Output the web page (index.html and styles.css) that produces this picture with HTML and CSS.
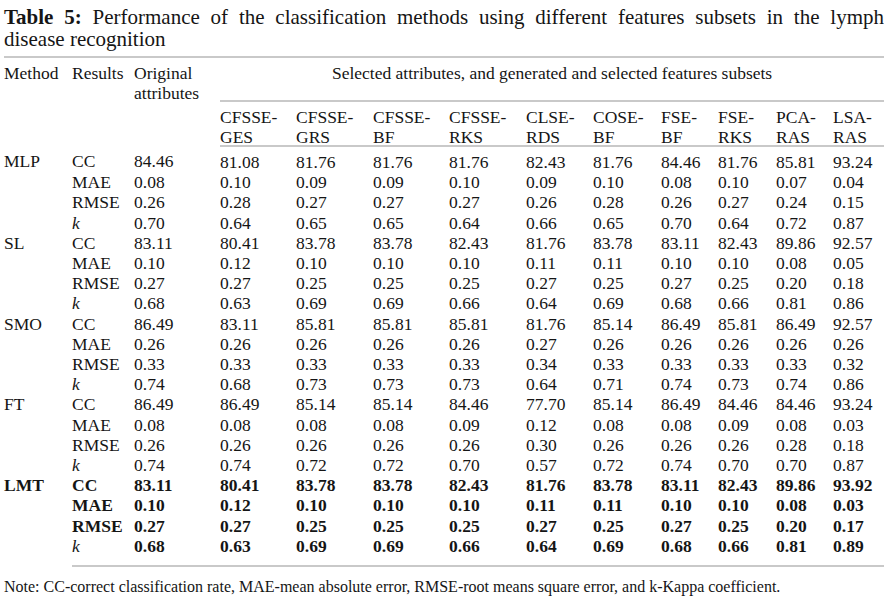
FILE: index.html
```html
<!DOCTYPE html>
<html lang="en">
<head>
<meta charset="utf-8">
<title>Table 5</title>
<link rel="stylesheet" href="styles.css">
</head>
<body>
<div class="page">
  <p class="caption"><span class="cap-line full"><b>Table 5:</b> Performance of the classification methods using different features subsets in the lymph</span><span class="cap-line">disease recognition</span></p>
  <table class="results">
    <colgroup>
      <col class="w-method"><col class="w-results"><col class="w-orig">
      <col class="w-76"><col class="w-77"><col class="w-76"><col class="w-77">
      <col class="w-67"><col class="w-68"><col class="w-57"><col class="w-58"><col class="w-57"><col class="w-51">
    </colgroup>
    <thead>
      <tr class="h1">
        <th rowspan="2">Method</th>
        <th rowspan="2">Results</th>
        <th rowspan="2">Original<br>attributes</th>
        <th colspan="10" class="group">Selected attributes, and generated and selected features subsets</th>
      </tr>
      <tr class="h2">
        <th><div class="two">CFSSE-<br>GES</div></th>
        <th><div class="two">CFSSE-<br>GRS</div></th>
        <th><div class="two">CFSSE-<br>BF</div></th>
        <th><div class="two">CFSSE-<br>RKS</div></th>
        <th><div class="two">CLSE-<br>RDS</div></th>
        <th><div class="two">COSE-<br>BF</div></th>
        <th><div class="two">FSE-<br>BF</div></th>
        <th><div class="two">FSE-<br>RKS</div></th>
        <th><div class="two">PCA-<br>RAS</div></th>
        <th><div class="two">LSA-<br>RAS</div></th>
      </tr>
    </thead>
    <tbody>
      <tr class="first"><td rowspan="4">MLP</td><td>CC</td><td>84.46</td><td>81.08</td><td>81.76</td><td>81.76</td><td>81.76</td><td>82.43</td><td>81.76</td><td>84.46</td><td>81.76</td><td>85.81</td><td>93.24</td></tr>
      <tr><td>MAE</td><td>0.08</td><td>0.10</td><td>0.09</td><td>0.09</td><td>0.10</td><td>0.09</td><td>0.10</td><td>0.08</td><td>0.10</td><td>0.07</td><td>0.04</td></tr>
      <tr><td>RMSE</td><td>0.26</td><td>0.28</td><td>0.27</td><td>0.27</td><td>0.27</td><td>0.26</td><td>0.28</td><td>0.26</td><td>0.27</td><td>0.24</td><td>0.15</td></tr>
      <tr><td><i class="kappa">k</i></td><td>0.70</td><td>0.64</td><td>0.65</td><td>0.65</td><td>0.64</td><td>0.66</td><td>0.65</td><td>0.70</td><td>0.64</td><td>0.72</td><td>0.87</td></tr>

      <tr><td rowspan="4">SL</td><td>CC</td><td>83.11</td><td>80.41</td><td>83.78</td><td>83.78</td><td>82.43</td><td>81.76</td><td>83.78</td><td>83.11</td><td>82.43</td><td>89.86</td><td>92.57</td></tr>
      <tr><td>MAE</td><td>0.10</td><td>0.12</td><td>0.10</td><td>0.10</td><td>0.10</td><td>0.11</td><td>0.11</td><td>0.10</td><td>0.10</td><td>0.08</td><td>0.05</td></tr>
      <tr><td>RMSE</td><td>0.27</td><td>0.27</td><td>0.25</td><td>0.25</td><td>0.25</td><td>0.27</td><td>0.25</td><td>0.27</td><td>0.25</td><td>0.20</td><td>0.18</td></tr>
      <tr><td><i class="kappa">k</i></td><td>0.68</td><td>0.63</td><td>0.69</td><td>0.69</td><td>0.66</td><td>0.64</td><td>0.69</td><td>0.68</td><td>0.66</td><td>0.81</td><td>0.86</td></tr>

      <tr><td rowspan="4">SMO</td><td>CC</td><td>86.49</td><td>83.11</td><td>85.81</td><td>85.81</td><td>85.81</td><td>81.76</td><td>85.14</td><td>86.49</td><td>85.81</td><td>86.49</td><td>92.57</td></tr>
      <tr><td>MAE</td><td>0.26</td><td>0.26</td><td>0.26</td><td>0.26</td><td>0.26</td><td>0.27</td><td>0.26</td><td>0.26</td><td>0.26</td><td>0.26</td><td>0.26</td></tr>
      <tr><td>RMSE</td><td>0.33</td><td>0.33</td><td>0.33</td><td>0.33</td><td>0.33</td><td>0.34</td><td>0.33</td><td>0.33</td><td>0.33</td><td>0.33</td><td>0.32</td></tr>
      <tr><td><i class="kappa">k</i></td><td>0.74</td><td>0.68</td><td>0.73</td><td>0.73</td><td>0.73</td><td>0.64</td><td>0.71</td><td>0.74</td><td>0.73</td><td>0.74</td><td>0.86</td></tr>

      <tr><td rowspan="4">FT</td><td>CC</td><td>86.49</td><td>86.49</td><td>85.14</td><td>85.14</td><td>84.46</td><td>77.70</td><td>85.14</td><td>86.49</td><td>84.46</td><td>84.46</td><td>93.24</td></tr>
      <tr><td>MAE</td><td>0.08</td><td>0.08</td><td>0.08</td><td>0.08</td><td>0.09</td><td>0.12</td><td>0.08</td><td>0.08</td><td>0.09</td><td>0.08</td><td>0.03</td></tr>
      <tr><td>RMSE</td><td>0.26</td><td>0.26</td><td>0.26</td><td>0.26</td><td>0.26</td><td>0.30</td><td>0.26</td><td>0.26</td><td>0.26</td><td>0.28</td><td>0.18</td></tr>
      <tr><td><i class="kappa">k</i></td><td>0.74</td><td>0.74</td><td>0.72</td><td>0.72</td><td>0.70</td><td>0.57</td><td>0.72</td><td>0.74</td><td>0.70</td><td>0.70</td><td>0.87</td></tr>

      <tr class="best"><td rowspan="4">LMT</td><td>CC</td><td>83.11</td><td>80.41</td><td>83.78</td><td>83.78</td><td>82.43</td><td>81.76</td><td>83.78</td><td>83.11</td><td>82.43</td><td>89.86</td><td>93.92</td></tr>
      <tr class="best"><td>MAE</td><td>0.10</td><td>0.12</td><td>0.10</td><td>0.10</td><td>0.10</td><td>0.11</td><td>0.11</td><td>0.10</td><td>0.10</td><td>0.08</td><td>0.03</td></tr>
      <tr class="best"><td>RMSE</td><td>0.27</td><td>0.27</td><td>0.25</td><td>0.25</td><td>0.25</td><td>0.27</td><td>0.25</td><td>0.27</td><td>0.25</td><td>0.20</td><td>0.17</td></tr>
      <tr class="best last"><td><i class="kappa">k</i></td><td>0.68</td><td>0.63</td><td>0.69</td><td>0.69</td><td>0.66</td><td>0.64</td><td>0.69</td><td>0.68</td><td>0.66</td><td>0.81</td><td>0.89</td></tr>
    </tbody>
  </table>
  <p class="note">Note: CC-correct classification rate, MAE-mean absolute error, RMSE-root means square error, and k-Kappa coefficient.</p>
</div>
</body>
</html>
```

FILE: styles.css
```css
html, body {
  margin: 0;
  padding: 0;
  background: #ffffff;
}

body {
  font-family: "Liberation Serif", "Times New Roman", serif;
  color: #151515;
}

.page {
  width: 884px;
  padding: 6px 0 0 4px;
  box-sizing: border-box;
}

.caption {
  margin: 0;
  font-size: 21px;
  line-height: 22px;
  display: flex;
  flex-direction: column;
}

.cap-line {
  display: block;
  white-space: nowrap;
}

.cap-line.full {
  text-align: justify;
  text-align-last: justify;
}

.caption b {
  font-weight: bold;
}

.results {
  margin-top: 6px;
  width: 880px;
  table-layout: fixed;
  border-collapse: collapse;
  font-size: 17.5px;
}

.w-method { width: 68px; }
.w-results { width: 62px; }
.w-orig { width: 86px; }
.w-76 { width: 76px; }
.w-77 { width: 77px; }
.w-67 { width: 67px; }
.w-68 { width: 68px; }
.w-57 { width: 57px; }
.w-58 { width: 58px; }
.w-51 { width: 51px; }

.results th,
.results td {
  padding: 0;
  text-align: left;
  vertical-align: top;
  font-weight: normal;
  white-space: nowrap;
}

.results .h1 th {
  border-top: 2px solid #c9c9c9;
  padding-top: 5px;
  line-height: 20px;
}

.results .h1 .group {
  text-align: center;
  padding-bottom: 17px;
  border-bottom: 2px solid #c9c9c9;
}

.results .h2 th {
  padding-top: 5px;
  border-bottom: 2px solid #c9c9c9;
}

.two {
  line-height: 20px;
  height: 38px;
}

.results tbody td {
  line-height: 20.2px;
}

.results tbody .first td {
  padding-top: 5px;
}

.results tbody .last td {
  padding-bottom: 9px;
  border-bottom: 2px solid #c9c9c9;
}

.results .best td {
  font-weight: bold;
}

.kappa {
  font-style: italic;
  font-weight: normal;
}

.note {
  margin: 10px 0 0;
  font-size: 16px;
  line-height: 20px;
}
```
